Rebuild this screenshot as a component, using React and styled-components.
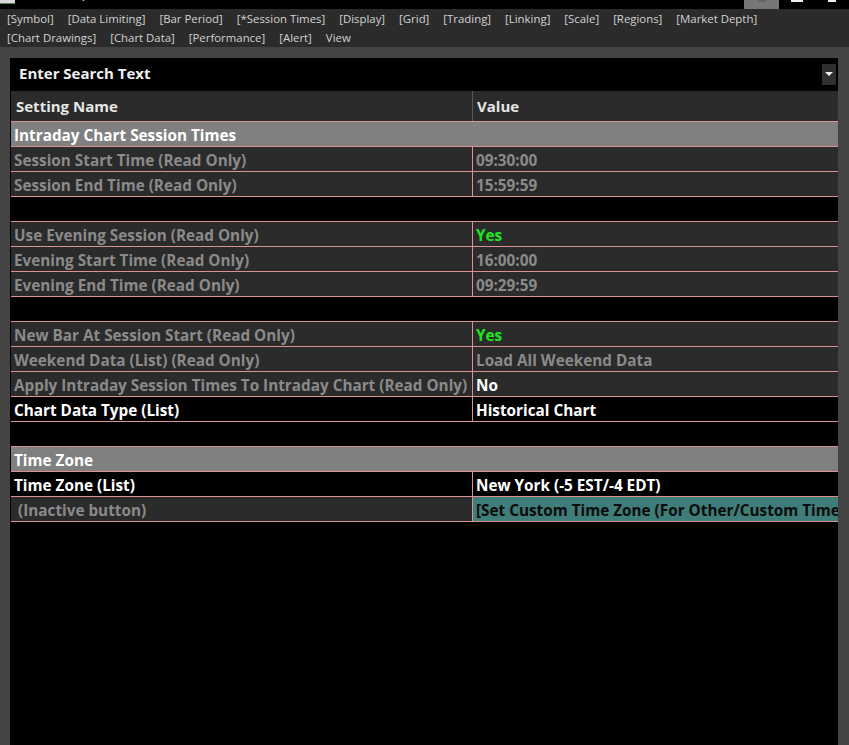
import React from "react";
import styled, { createGlobalStyle } from "styled-components";

const GlobalStyle = createGlobalStyle`
    html, body {
        margin: 0;
        padding: 0;
        background: #3f3f3f;
    }
    body {
        font-family: "Open Sans", "Noto Sans", sans-serif;
    }
`;

const PINK = "#d99393";

/* ---------- window chrome ---------- */

const Window = styled.div`
    width: 849px;
    height: 745px;
    display: flex;
    flex-direction: column;
    background: #444;
    overflow: hidden;
`;

const TitleBar = styled.div`
    height: 9px;
    flex: none;
    display: flex;
    align-items: flex-start;
    background: #000;
    overflow: hidden;
`;

const AppIcon = styled.div`
    width: 15px;
    height: 3px;
    background: #d8d8d8;
    border-bottom: 1px solid #4a8a4a;
`;

const TitleText = styled.span`
    margin-left: 66px;
    margin-top: -13px;
    font-size: 12px;
    line-height: 16px;
    color: #fff;
`;

const WinButtons = styled.div`
    margin-left: auto;
    display: flex;
`;

const WinButton = styled.div`
    width: 35px;
    height: 9px;
    display: flex;
    justify-content: center;
    background: ${(p) => (p.$hover ? "#777" : "transparent")};
`;

const WinGlyph = styled.div`
    width: ${(p) => p.$w}px;
    height: 2px;
    background: ${(p) => p.$color};
`;

/* ---------- menu ---------- */

const MenuBar = styled.div`
    flex: none;
    height: 38px;
    padding: 0 7px;
    background: #2b2b2b;
    display: flex;
    flex-direction: column;
    justify-content: center;
`;

const MenuRow = styled.div`
    display: flex;
    gap: 14px;
    height: 19px;
    align-items: center;
`;

const MenuItem = styled.span`
    font-size: 11.4px;
    color: #d2d2d2;
    white-space: nowrap;
`;

/* ---------- settings panel ---------- */

const Frame = styled.div`
    flex: 1;
    display: flex;
    padding: 11px 11px 0 10px;
    min-height: 0;
`;

const Panel = styled.div`
    flex: 1;
    background: #000;
    display: flex;
    flex-direction: column;
    overflow: hidden;
`;

const SearchBar = styled.div`
    height: 33px;
    flex: none;
    display: flex;
    align-items: center;
    padding-left: 9px;
    padding-bottom: 3px;
    box-sizing: border-box;
    font-size: 15px;
    font-weight: 700;
    color: #f0f0f0;
`;

const DropButton = styled.div`
    margin-left: auto;
    margin-right: 2px;
    margin-top: 2px;
    width: 14px;
    height: 21px;
    background: #2f2f2f;
    display: flex;
    align-items: center;
    justify-content: center;
`;

const Arrow = styled.div`
    width: 0;
    height: 0;
    border-left: 4px solid transparent;
    border-right: 4px solid transparent;
    border-top: 4px solid #f0f0f0;
`;

const Table = styled.div`
    margin-left: 1px;
    display: flex;
    flex-direction: column;
`;

const HeaderRow = styled.div`
    display: grid;
    grid-template-columns: 461px 1fr;
    height: 30px;
    background: #2b2b2b;
    border-bottom: 1px solid ${PINK};
`;

const HeaderCell = styled.div`
    display: flex;
    align-items: center;
    padding-left: ${(p) => (p.$first ? 5 : 4)}px;
    font-size: 15px;
    font-weight: 700;
    color: #e6e6e6;
    border-left: ${(p) => (p.$first ? "none" : "1px solid #5a5a5a")};
`;

const Row = styled.div`
    display: grid;
    grid-template-columns: 461px 1fr;
    height: 24px;
    border-bottom: 1px solid ${PINK};
    background: ${(p) => (p.$active ? "#000" : "#2b2b2b")};
`;

const SectionRow = styled.div`
    height: 23px;
    display: flex;
    align-items: center;
    padding: 1px 0 0 3px;
    background: #808080;
    border-bottom: 1px solid ${PINK};
    font-size: 15.3px;
    font-weight: 700;
    color: #fff;
`;

const BlankRow = styled.div`
    height: 24px;
    background: #000;
    border-bottom: 1px solid ${PINK};
`;

const NameCell = styled.div`
    display: flex;
    align-items: center;
    padding: 1px 0 0 3px;
    font-size: 15.3px;
    font-weight: 700;
    white-space: nowrap;
    overflow: hidden;
    color: ${(p) => (p.$active ? "#fff" : "#8a8a8a")};
`;

const ValueCell = styled.div`
    display: flex;
    align-items: center;
    padding: 1px 0 0 3px;
    border-left: 1px solid ${PINK};
    font-size: 15.3px;
    font-weight: 700;
    white-space: nowrap;
    overflow: hidden;
    background: ${(p) => (p.$button ? "#3e7d79" : "transparent")};
    color: ${(p) =>
        p.$button ? "#0c0c0c" : p.$green ? "#1ee61e" : p.$active ? "#fff" : "#8a8a8a"};
`;

/* ---------- data ---------- */

const menuLine1 = [
    "[Symbol]", "[Data Limiting]", "[Bar Period]", "[*Session Times]", "[Display]",
    "[Grid]", "[Trading]", "[Linking]", "[Scale]", "[Regions]", "[Market Depth]",
];
const menuLine2 = ["[Chart Drawings]", "[Chart Data]", "[Performance]", "[Alert]", "View"];

const rows = [
    { type: "section", name: "Intraday Chart Session Times" },
    { name: "Session Start Time (Read Only)", value: "09:30:00" },
    { name: "Session End Time (Read Only)", value: "15:59:59" },
    { type: "blank" },
    { name: "Use Evening Session (Read Only)", value: "Yes", green: true },
    { name: "Evening Start Time (Read Only)", value: "16:00:00" },
    { name: "Evening End Time (Read Only)", value: "09:29:59" },
    { type: "blank" },
    { name: "New Bar At Session Start (Read Only)", value: "Yes", green: true },
    { name: "Weekend Data (List) (Read Only)", value: "Load All Weekend Data" },
    { name: "Apply Intraday Session Times To Intraday Chart (Read Only)", value: "No", valueWhite: true },
    { name: "Chart Data Type (List)", value: "Historical Chart", active: true },
    { type: "blank" },
    { type: "section", name: "Time Zone" },
    { name: "Time Zone (List)", value: "New York (-5 EST/-4 EDT)", active: true },
    { name: "\u00a0(Inactive button)", value: "[Set Custom Time Zone (For Other/Custom Time Zones)]", button: true },
];

const SettingRow = ({ row }) => {
    if (row.type === "section") return <SectionRow>{row.name}</SectionRow>;
    if (row.type === "blank") return <BlankRow />;
    return (
        <Row $active={row.active}>
            <NameCell $active={row.active}>{row.name}</NameCell>
            <ValueCell
                $active={row.active || row.valueWhite}
                $green={row.green}
                $button={row.button}
            >
                {row.value}
            </ValueCell>
        </Row>
    );
};

const App = () => {
    return (
        <>
            <GlobalStyle />
            <Window>
                <TitleBar>
                    <AppIcon />
                    <TitleText>(</TitleText>
                    <WinButtons>
                        <WinButton $hover>
                            <WinGlyph $w={8} $color="#666" />
                        </WinButton>
                        <WinButton>
                            <WinGlyph $w={12} $color="#eee" />
                        </WinButton>
                        <WinButton>
                            <WinGlyph $w={8} $color="#eee" />
                        </WinButton>
                    </WinButtons>
                </TitleBar>
                <MenuBar>
                    <MenuRow>
                        {menuLine1.map((m) => <MenuItem key={m}>{m}</MenuItem>)}
                    </MenuRow>
                    <MenuRow>
                        {menuLine2.map((m) => <MenuItem key={m}>{m}</MenuItem>)}
                    </MenuRow>
                </MenuBar>
                <Frame>
                    <Panel>
                        <SearchBar>
                            Enter Search Text
                            <DropButton><Arrow /></DropButton>
                        </SearchBar>
                        <Table>
                            <HeaderRow>
                                <HeaderCell $first>Setting Name</HeaderCell>
                                <HeaderCell>Value</HeaderCell>
                            </HeaderRow>
                            {rows.map((r, i) => <SettingRow key={i} row={r} />)}
                        </Table>
                    </Panel>
                </Frame>
            </Window>
        </>
    );
};

export default App;
